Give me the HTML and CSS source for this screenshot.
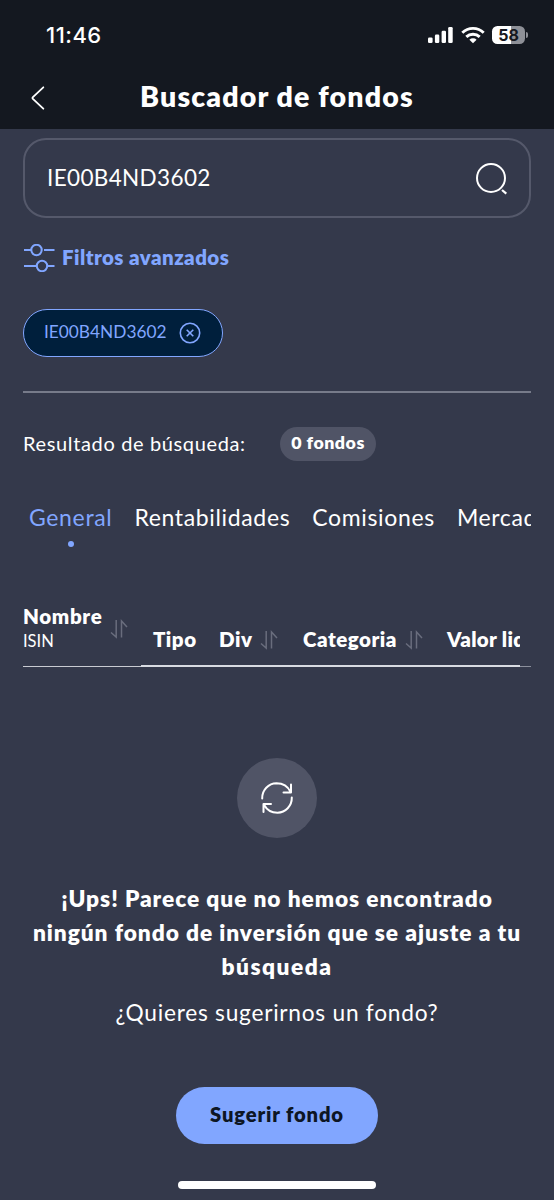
FILE: index.html
```
<!DOCTYPE html>
<html lang="es">
<head>
<meta charset="utf-8">
<title>Buscador de fondos</title>
<link rel="stylesheet" href="styles.css">
</head>
<body>
<svg class="defs" width="0" height="0" aria-hidden="true">
  <symbol id="sort" viewBox="0 0 18 20"><path d="M6.2 1v17L1 13.5M11.5 18.500V2L17 8" fill="none" stroke="currentColor" stroke-width="1.5"/></symbol>
</svg>
<header class="top">
  <div class="status">
    <span class="time">11:46</span>
    <div class="indicators">
      <svg width="25" height="18" viewBox="0 0 25 18" fill="#fff"><rect x="0" y="11.500" width="4.600" height="5.500" rx="1.300"/><rect x="6.900" y="8.600" width="4.400" height="8.400" rx="1.300"/><rect x="13.600" y="4.800" width="4.400" height="12.200" rx="1.300"/><rect x="20.200" y="1" width="4.500" height="16" rx="1.300"/></svg>
      <svg class="wifi" width="24" height="18" viewBox="0 0 24 18" fill="none" stroke="#fff" stroke-width="2.900"><path d="M1.300 6.700a15.500 15.500 0 0 1 21.400 0"/><path d="M5.300 10.900a9.700 9.700 0 0 1 13.400 0"/><path d="M12 17.200l-3.600-3.500a5.200 5.200 0 0 1 7.200 0z" fill="#fff" stroke="none"/></svg>
      <div class="battery"><span class="level">58</span><i class="cap"></i></div>
    </div>
  </div>
  <div class="bar">
    <svg class="back" width="14" height="24" viewBox="0 0 14 24" fill="none" stroke="#fff" stroke-width="1.800" stroke-linecap="round" stroke-linejoin="round"><path d="M12.300 1.300L1.900 11.200q-.8.800 0 1.600L12.300 22.700"/></svg>
    <h1>Buscador de fondos</h1>
  </div>
</header>
<main>
  <div class="search">
    <span>IE00B4ND3602</span>
    <svg width="32" height="32" viewBox="0 0 32 32" fill="none" stroke="#fff" stroke-width="2"><circle cx="15" cy="15" r="14"/><path d="M26 27l4.300 3.700" stroke-width="2.200"/></svg>
  </div>
  <div class="filters">
    <svg width="31" height="28" viewBox="0 0 31 28" fill="none" stroke="currentColor" stroke-width="2"><path d="M0 6h7M0 22h12.500M23.500 22h7M20 6h10.500"/><circle cx="12.500" cy="6" r="5.200"/><circle cx="18" cy="22" r="5.200"/></svg>
    <span>Filtros avanzados</span>
  </div>
  <div class="chip">
    <span>IE00B4ND3602</span>
    <svg width="22" height="22" viewBox="0 0 22 22" fill="none" stroke="currentColor" stroke-width="1.600"><circle cx="11" cy="11" r="9.700"/><path d="M7.700 7.700l6.600 6.600M14.300 7.700l-6.600 6.600"/></svg>
  </div>
  <hr class="rule">
  <div class="result"><span>Resultado de búsqueda:</span><b>0 fondos</b></div>
  <nav class="tabs">
    <a class="active">General</a><a>Rentabilidades</a><a>Comisiones</a><a>Mercado</a>
  </nav>
  <div class="table">
    <div class="name-col">
      <div class="name"><b>Nombre</b><span>ISIN</span></div>
      <svg class="sort"><use href="#sort"/></svg>
    </div>
    <div class="cols">
      <b class="tipo">Tipo</b><b class="div">Div</b><svg class="sort"><use href="#sort"/></svg><b class="cat">Categoria</b><svg class="sort"><use href="#sort"/></svg><b class="valor">Valor liquidativo</b>
    </div>
    <div class="edge"></div>
  </div>
  <section class="empty">
    <div class="disc">
      <svg width="32" height="32" viewBox="0 0 32 32" fill="none" stroke="#fff" stroke-width="2" stroke-linecap="round" stroke-linejoin="round"><path d="M1.200 16.500C1 8 7.500 1.500 15.500 1.300c6 0 11.400 3.200 14 8.600M30 2.500v8h-7.500M30.800 15.500C31 24 24.500 30.500 16.500 30.700c-6 0-10.900-3.200-13.500-8M2.500 30v-8H10"/></svg>
    </div>
    <h2><span>¡Ups! Parece que no hemos encontrado</span><span>ningún fondo de inversión que se ajuste a tu</span><span class="last">búsqueda</span></h2>
    <p>¿Quieres sugerirnos un fondo?</p>
    <button>Sugerir fondo</button>
  </section>
</main>
<div class="home"></div>
</body>
</html>
```
FILE: styles.css
```
* { box-sizing: border-box; }
body { margin: 0; width: 554px; height: 1200px; overflow: hidden; display: flex; flex-direction: column; background: #34394b; color: #fff; font-family: Lato, sans-serif; }
svg { display: block; flex: none; }
.defs { position: absolute; }
b, h1, h2, button { font-weight: 800; }

.top { height: 129px; flex: none; background: #141820; }
.status { height: 71px; padding: 0 26px 0 46px; display: flex; align-items: center; justify-content: space-between; }
.time { font: 500 22px/24px Inter, sans-serif; letter-spacing: .5px; margin-top: -1px; }
.indicators { display: flex; align-items: center; margin-top: -1px; }
.wifi { margin: 0 7px 0 8px; }
.battery { display: flex; align-items: center; }
.level { width: 33px; height: 18px; border-radius: 5.500px; background: linear-gradient(90deg, #fff 58%, #8e9097 58%); color: #151820; font: 700 16px/18px Inter, sans-serif; text-align: center; }
.cap { width: 2px; height: 6px; margin-left: 1px; border-radius: 0 2px 2px 0; background: #8e9097; }
.bar { height: 53px; padding-left: 31px; display: flex; align-items: center; }
.back { margin-top: 1px; }
h1 { margin: -3px 0 0 95px; font-size: 28.500px; line-height: 34px; letter-spacing: 1.150px; white-space: nowrap; }

main { padding: 9px 23px 0; }
.search { height: 80px; border: 2px solid #55596b; border-radius: 23px; padding: 0 21px 2px 22px; display: flex; align-items: center; justify-content: space-between; font-size: 22.500px; letter-spacing: .350px; }
.search svg { margin-top: 3px; }
.filters { height: 32px; margin-top: 23px; display: flex; align-items: center; gap: 7px; padding-left: 1px; color: #81a6ff; font-size: 20.500px; font-weight: 800; letter-spacing: .42px; }
.filters svg { margin-top: 2px; }
.filters span { margin-top: -1px; }
.chip { width: 200px; height: 48px; margin-top: 36px; border: 1.500px solid #81a6ff; border-radius: 24px; background: #001f3c; color: #81a6ff; padding: 0 0 3px 20px; display: flex; align-items: center; font-size: 17.300px; letter-spacing: 0; }
.chip svg { margin: 3px 0 0 12px; }
.rule { height: 2px; margin: 34px 0 0; border: 0; background: #777b8a; }
.result { height: 34px; margin-top: 34px; display: flex; align-items: center; font-size: 20px; letter-spacing: .64px; white-space: nowrap; }
.result span { width: 257px; flex: none; margin-top: -3px; }
.result b { width: 96px; height: 34px; border-radius: 17px; background: #505466; text-align: center; font-size: 17.800px; line-height: 30px; letter-spacing: .500px; }

.tabs { height: 56px; margin-top: 40px; padding-left: 6px; display: flex; gap: 22px; overflow: hidden; font-size: 23px; line-height: 33px; letter-spacing: .65px; white-space: nowrap; }
.tabs a { flex: none; }
.active { color: #81a6ff; }
.active::after { content: ""; display: block; width: 6px; height: 6px; margin: 7px auto 0; border-radius: 50%; background: #81a6ff; }

.table { height: 69px; margin-top: 41px; display: flex; font-size: 20.500px; }
.name-col { width: 118px; border-bottom: 1px solid #c9cbd2; display: flex; }
.name { width: 87px; display: flex; flex-direction: column; line-height: 25px; padding-top: 6px; }
.name b { letter-spacing: .65px; }
.name span { font-size: 16.500px; letter-spacing: 0; }
.sort { width: 18px; height: 20px; color: #696d7d; }
.name-col .sort { margin-top: 21px; }
.cols { width: 379px; border-bottom: 2px solid #d8dbe2; display: flex; padding: 29px 0 0 12px; overflow: hidden; line-height: 25px; white-space: nowrap; }
.cols b { flex: none; }
.cols .sort { margin-top: 3px; }
.tipo { width: 66px; letter-spacing: .5px; }
.div { width: 41px; letter-spacing: .6px; }
.cat { width: 102px; margin-left: 25px; letter-spacing: .5px; }
.valor { margin-left: 24px; letter-spacing: .3px; }
.edge { flex: 1; border-bottom: 1px solid #8b8f9c; }

.empty { display: flex; flex-direction: column; align-items: center; text-align: center; margin: 91px -23px 0; }
.disc { width: 80px; height: 80px; border-radius: 50%; background: #505466; display: flex; align-items: center; justify-content: center; }
h2 { margin: 44px 0 0; font-size: 22.700px; line-height: 34px; letter-spacing: .940px; white-space: nowrap; }
h2 span { display: block; }
.last { letter-spacing: 1.500px; }
p { margin: 12px 0 0; font-size: 22.700px; line-height: 34px; letter-spacing: .750px; }
button { width: 202px; height: 57px; margin: 57px 0 0; padding: 0 0 3px; border: 0; border-radius: 29px; background: #81a6ff; color: #0d1624; font-family: inherit; font-size: 20.200px; letter-spacing: .850px; }
.home { width: 198px; height: 8px; margin: 37px auto 0; border-radius: 4px; background: #fff; flex: none; }
```
